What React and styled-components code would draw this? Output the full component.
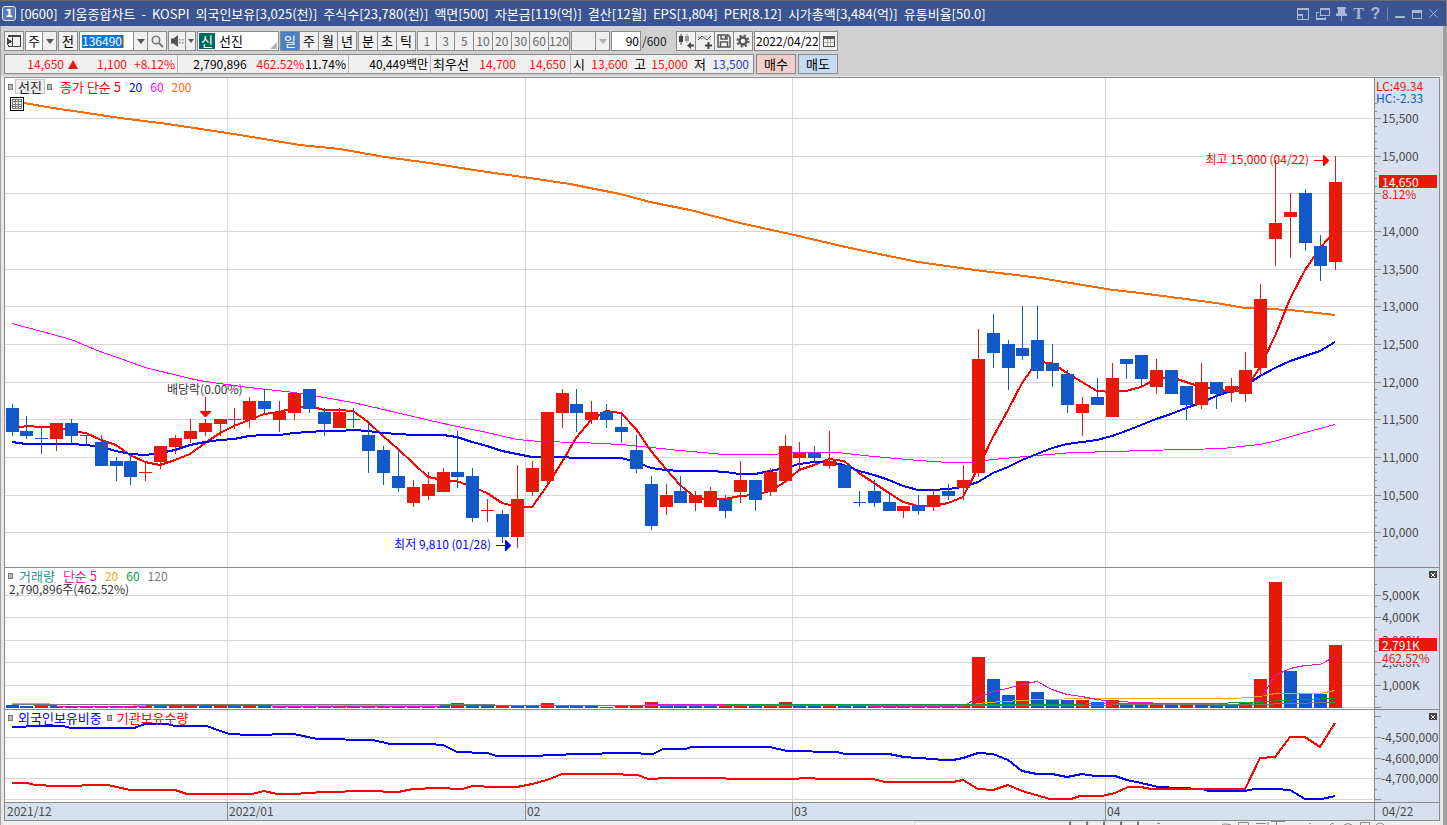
import React from 'react';
import styled, { createGlobalStyle } from 'styled-components';

const colors = {
  titleBlue: '#3a5592',
  titleIcon: '#a9b6d4',
  panel: '#d0d0d0',
  face: '#f0f0f0',
  line: '#8a8a8a',
  grid: '#d6d6d6',
  axis: '#d6e1ef',
  up: '#e71a0a',
  down: '#1159cb',
  red: '#ff0000',
  blue: '#0000ff',
  magenta: '#ff00ff',
  orange: '#ff6a00',
  text: '#333333',
};

const PLOT_LEFT = 5;
const PLOT_WIDTH = 1369;
const MONTH_LINES = [227, 525, 792, 1105];

const TITLE_FIELDS = [
  '[0600]', '키움종합차트', '-', 'KOSPI', '외국인보유[3,025(천)]', '주식수[23,780(천)]', '액면[500]', '자본금[119(억)]',
  '결산[12월]', 'EPS[1,804]', 'PER[8.12]', '시가총액[3,484(억)]', '유통비율[50.0]',
];

// [high, bodyTop, bodyBottom, low, up?]
const CANDLES = [
  [404, 408, 432, 436, 0], [416, 431, 436, 439, 0], [428, 438, 439, 454, 0], [423, 423, 439, 451, 1],
  [419, 423, 436, 444, 0], [435, 435, 436, 446, 0], [435, 442, 466, 466, 0], [457, 461, 466, 481, 0],
  [455, 461, 477, 485, 0], [462, 472, 473, 481, 1], [446, 446, 462, 469, 1], [435, 438, 447, 454, 1],
  [419, 431, 439, 443, 1], [419, 423, 432, 436, 1], [419, 419, 424, 436, 1], [408, 419, 420, 429, 1],
  [397, 401, 420, 428, 1], [389, 401, 409, 413, 0], [401, 412, 420, 432, 1], [393, 393, 413, 420, 1],
  [389, 389, 409, 413, 0], [408, 412, 424, 436, 0], [408, 412, 428, 428, 1], [408, 419, 420, 428, 0],
  [423, 435, 451, 473, 0], [446, 450, 473, 485, 0], [449, 476, 488, 492, 0], [480, 487, 503, 507, 1],
  [472, 484, 496, 500, 1], [468, 472, 492, 492, 1], [431, 472, 477, 488, 0], [468, 476, 518, 522, 0],
  [499, 510, 511, 522, 1], [510, 514, 537, 543, 0], [465, 499, 537, 548, 1], [461, 468, 492, 496, 1],
  [412, 412, 481, 484, 1], [389, 393, 413, 428, 1], [389, 404, 413, 432, 0], [401, 412, 420, 424, 1],
  [404, 412, 420, 428, 0], [412, 427, 432, 443, 0], [435, 450, 469, 473, 0], [476, 484, 526, 530, 0],
  [484, 495, 507, 515, 1], [476, 491, 503, 503, 0], [491, 495, 503, 511, 1], [487, 491, 507, 507, 1],
  [495, 499, 511, 518, 0], [461, 480, 492, 503, 1], [480, 480, 500, 511, 0], [468, 472, 492, 496, 1],
  [435, 446, 481, 481, 1], [442, 453, 458, 470, 1], [446, 453, 458, 462, 0], [431, 461, 466, 469, 1],
  [465, 465, 488, 488, 0], [491, 502, 503, 507, 0], [480, 491, 503, 507, 0], [494, 502, 511, 511, 0],
  [506, 506, 511, 518, 1], [495, 506, 511, 515, 0], [490, 495, 507, 511, 1], [484, 491, 496, 500, 0],
  [465, 480, 488, 500, 1], [329, 359, 473, 477, 1], [314, 333, 353, 368, 0], [340, 344, 368, 390, 0],
  [306, 348, 356, 360, 0], [306, 340, 371, 379, 0], [344, 363, 371, 387, 0], [370, 374, 405, 413, 0],
  [397, 404, 413, 436, 1], [378, 397, 405, 405, 0], [363, 378, 417, 417, 1], [359, 359, 364, 379, 0],
  [355, 355, 379, 386, 0], [359, 370, 387, 394, 1], [370, 370, 394, 394, 0], [386, 386, 405, 420, 0],
  [363, 382, 405, 409, 1], [382, 382, 394, 409, 0], [378, 386, 392, 402, 1], [352, 370, 394, 402, 1],
  [284, 299, 368, 375, 1], [160, 223, 239, 266, 1], [193, 212, 217, 258, 1], [189, 193, 243, 251, 0],
  [235, 246, 266, 281, 0], [156, 182, 262, 270, 1],
];

const MA5 = [
  429, 426, 427, 427, 431, 433, 440, 445, 455, 462, 465, 460, 454, 443, 433, 426, 420, 414, 412, 408,
  406, 410, 410, 411, 422, 436, 449, 463, 477, 480, 481, 487, 493, 503, 507, 507, 486, 462, 438, 420,
  411, 413, 429, 451, 469, 485, 497, 500, 499, 496, 495, 491, 482, 470, 465, 459, 461, 473, 483, 493,
  502, 506, 506, 503, 497, 468, 437, 410, 383, 362, 363, 373, 382, 391, 392, 391, 387, 379, 377, 382,
  387, 389, 392, 390, 367, 336, 299, 270, 248, 231,
];

const MA20 = [
  442, 444, 444, 444, 444, 445, 447, 451, 454, 455, 453, 450, 445, 442, 440, 439, 436, 435, 435, 433,
  432, 431, 431, 430, 431, 433, 434, 435, 435, 435, 437, 442, 446, 451, 454, 457, 457, 457, 458, 458,
  458, 458, 462, 468, 470, 471, 471, 471, 472, 474, 474, 471, 468, 464, 462, 462, 465, 471, 475, 480,
  486, 490, 490, 489, 487, 482, 473, 467, 460, 454, 448, 444, 442, 440, 436, 431, 425, 419, 414, 408,
  403, 396, 391, 386, 376, 368, 361, 356, 351, 342,
];

const MA60 = '12,323 42,331 71,339 100,351 126,360 145,367 190,378 205,381 249,387 294,392 324,397 353,402 383,409 413,416 443,423 487,432 517,439 540,441 580,442 621,444 651,447 680,450 725,454 773,454 793,452 837,452 874,456 918,460 948,462 970,462 993,459 1037,455 1073,452 1118,451 1141,450 1187,449 1223,448 1240,446 1260,444 1277,440 1305,432 1335,424';
const MA200 = '12,100 24,103 53,108 87,113 120,118 168,124 240,135 300,145 340,149 385,157 430,163 480,171 530,178 570,184 620,194 650,202 690,210 740,223 790,234 850,248 918,262 975,270 1040,278 1113,290 1140,293 1216,303 1245,308 1290,310 1335,315';

// one letter per session: r = up volume, b = down volume
const VOLUME_SIDE = 'bbrbbrrrbrbrrbrbrbrbbrrbrbbbbbrbbrbbrbbbbrrrbbbbrrbrrbbrbbbbbrrrrrbbrbbbrbrbbrbrbbbrrrbbbr';
const VOLUME_TOPS = {
  0: 705, 30: 703, 36: 703, 40: 707, 43: 702, 52: 702, 64: 704, 65: 657, 66: 679, 67: 695, 68: 681, 69: 692,
  70: 700, 71: 700, 72: 700, 73: 702, 74: 700, 75: 704, 76: 704, 77: 704, 78: 704, 79: 704, 80: 704,
  81: 704, 82: 706, 83: 703, 84: 679, 85: 582, 86: 671, 87: 693, 88: 694, 89: 645,
};
const VOLUME_LINES = [
  ['#eeaa00', '12,703 49,703 50,704 213,705 690,705 966,705 987,702 1040,699 1088,698 1235,698 1260,696 1275,693 1320,693 1335,690'],
  ['#e01ab8', '34,705 80,706 213,705 330,706 380,706 500,705 793,704 837,704 880,706 963,706 978,697 993,691 1007,688 1022,684 1037,681 1052,689 1067,694 1082,696 1097,699 1112,701 1144,702 1179,704 1231,705 1245,705 1260,700 1275,675 1290,668 1305,665 1320,664 1335,656'],
  ['#0a9a3c', '688,705 762,704 793,704 978,704 1196,703 1260,702 1277,700 1335,698'],
  ['#777777', '12,704 966,705 1262,704 1284,703 1335,702'],
];

const FOREIGN = '12,727 41,726 63,726 71,728 134,728 145,724 167,724 175,726 207,726 220,731 230,734 250,735 294,734 317,739 373,740 390,744 428,744 443,745 457,752 487,753 497,756 532,756 577,754 628,753 653,754 663,749 685,749 692,747 770,747 787,751 837,752 845,754 889,754 904,757 933,759 943,760 953,760 963,758 978,753 993,754 1008,760 1022,771 1037,774 1052,774 1067,777 1082,774 1095,776 1115,776 1127,780 1141,783 1158,787 1202,789 1209,791 1245,791 1254,789 1275,789 1290,790 1305,799 1322,799 1335,796';
const INSTITUTION = '12,783 27,783 35,785 57,786 108,785 130,790 175,790 187,794 252,794 264,791 277,794 294,794 324,792 367,791 398,792 413,789 437,788 462,789 473,786 495,787 517,787 532,784 547,780 562,774 607,774 638,775 648,779 668,778 725,778 727,779 785,779 813,778 817,779 873,779 885,782 953,782 963,780 978,789 993,790 1008,785 1022,791 1050,799 1071,799 1080,796 1102,796 1115,793 1128,787 1141,787 1151,789 1245,789 1260,758 1275,757 1290,737 1305,737 1320,747 1335,723';

const candleX = i => Math.floor(12 + i * 14.866);
const toPoints = values => values.map((y, i) => `${candleX(i)},${y}`).join(' ');
const leftOf = x => `${((x - PLOT_LEFT) / PLOT_WIDTH) * 100}%`;

const GlobalStyle = createGlobalStyle`
  * { box-sizing: border-box; }
  body {
    margin: 0;
    background: #a0a0a0;
    color: #000;
    font: 13px/14px "Noto Sans CJK KR", sans-serif;
  }
  button, input, select { font: inherit; color: inherit; margin: 0; padding: 0; border-radius: 0; }
`;

const Window = styled.div`
  min-height: 100vh;
  overflow: hidden;
  display: flex;
  flex-direction: column;
`;

const TitleBar = styled.header`
  height: 26px;
  padding: 0 7px 0 2px;
  display: flex;
  align-items: center;
  border-top: 1px solid #6b6b6b;
  border-right: 1px solid #7a7a7a;
  background: ${colors.titleBlue};
  color: #fff;
`;

const WindowNumber = styled.span`
  width: 14px;
  height: 15px;
  border: 1px solid #dfe6f5;
  border-radius: 3px;
  background: #5d7ab8;
  font: bold 11px/13px "DejaVu Sans", sans-serif;
  text-align: center;
`;

const Title = styled.h1`
  flex: 1;
  margin: 0 0 0 4px;
  display: flex;
  gap: 6px;
  font-size: 13px;
  font-weight: 400;
  line-height: 18px;
  white-space: nowrap;
  overflow: hidden;
`;

const TitleActions = styled.div`
  display: flex;
  align-items: center;
  gap: 6px;
  color: ${colors.titleIcon};
`;

const TitleButton = styled.button`
  width: ${p => (p.$narrow ? 11 : 14)}px;
  height: 16px;
  border: 0;
  background: none;
  font: bold 16px/16px ${p => (p.$sans ? '"Liberation Sans"' : '"Liberation Serif"')}, serif;
  display: flex;
  align-items: center;
  justify-content: center;
`;

const TitleDivider = styled.span`
  width: 1px;
  height: 14px;
  background: #7c8299;
`;

const Body = styled.div`
  flex: 1;
  display: flex;
  flex-direction: column;
  margin-right: 4px;
  border-left: 1px solid #a0a0a0;
  background: #e8e8e8;
`;

const Controls = styled.div`
  padding: 5px 3px 2px;
  margin-bottom: 1px;
  display: flex;
  flex-direction: column;
  gap: 3px;
  background: ${colors.panel};
`;

const ToolRow = styled.div`
  display: flex;
  gap: ${p => p.$gap || 1}px;
  height: 20px;
`;

const ToolGroup = styled.div`
  display: flex;
  position: relative;
  width: ${p => p.$width}px;
  border: 1px solid ${colors.line};
  background: ${colors.face};

  && > * + * { border-left: 1px solid ${colors.line}; }
`;

const ToolButton = styled.button`
  flex: ${p => (p.$width ? `0 0 ${p.$width}px` : '1 1 0')};
  border: 0;
  display: flex;
  align-items: center;
  justify-content: center;
  background: ${p => (p.$active ? '#4a80c6' : colors.face)};
  color: ${p => (p.$active ? '#fff' : p.$muted ? '#666' : '#000')};
  font-size: ${p => (p.$muted ? 12 : 13)}px;
`;

const ToolInput = styled.input`
  flex: 1;
  width: 0;
  border: 0;
  padding: 0 1px;
  background: #fff;
  font-size: 12px;
  text-align: ${p => p.$align || 'left'};
  outline: 0;
`;

const CodeField = styled.span`
  flex: 1;
  display: flex;
  align-items: center;
  padding-left: 2px;
  background: #fff;
`;

const CodeInput = styled.input`
  width: 42px;
  height: 13px;
  border: 0;
  border-right: 1px solid #ff8a1e;
  background: #0a78d7;
  color: #fff;
  font-size: 12px;
  outline: 0;
`;

const ToolSelect = styled.select`
  flex: 1;
  width: 0;
  border: 0;
  padding: 0 0 0 2px;
  appearance: none;
  background: ${p => (p.disabled ? colors.face : '#fff')};
  outline: 0;
`;

const SelectArrow = styled.span`
  position: absolute;
  top: 0;
  right: 0;
  width: 14px;
  height: 18px;
  display: flex;
  align-items: center;
  justify-content: center;
  background: ${colors.face};
  pointer-events: none;
`;

const StockBadge = styled.span`
  width: 16px;
  margin: 1px 4px 1px 1px;
  background: #006860;
  color: #fff;
  line-height: 16px;
  text-align: center;
`;

const StockBox = styled.div`
  display: flex;
  position: relative;
  width: 82px;
  border: 1px solid ${colors.line};
  background: #fff;
  line-height: 17px;

  &::after {
    content: '';
    position: absolute;
    right: 1px;
    bottom: 1px;
    border-style: solid;
    border-width: 0 0 7px 7px;
    border-color: transparent transparent #b4b4b4;
  }
`;

const CountTotal = styled.span`
  width: 33px;
  font-size: 12px;
  line-height: 20px;
  color: #222;
`;

const Quote = styled.div`
  display: flex;
  width: 750px;
  border: 1px solid ${colors.line};
  background: ${colors.face};
`;

const QuoteCell = styled.div`
  width: ${p => p.$width}px;
  padding: 0 2px;
  display: flex;
  align-items: center;
  white-space: nowrap;

  & + & { border-left: 1px solid #b4b4b4; }
`;

const QuoteValue = styled.span`
  width: ${p => p.$width}px;
  text-align: right;
  font-size: ${p => (p.$label ? 13 : 12)}px;
  color: ${p => p.$color || '#000'};
`;

const UpMark = styled.span`
  margin-left: 4px;
  border-style: solid;
  border-width: 0 5px 9px;
  border-color: transparent transparent ${colors.up};
`;

const OrderButton = styled.button`
  width: 40px;
  border: 1px solid ${colors.line};
  background: ${p => p.$background};
`;

const ChartFrame = styled.main`
  margin: 0 3px;
  border: 1px solid ${colors.line};
  border-bottom: 0;
  background: #fff;
`;

const Panel = styled.section`
  display: grid;
  grid-template-columns: 1fr 65px;
  border-bottom: 1px solid ${colors.line};
`;

const Plot = styled.div`
  position: relative;
  min-width: 0;
`;

const Axis = styled.div`
  position: relative;
  border-left: 1px solid ${colors.line};
  background: ${colors.axis};
  color: #4a4a4a;
  font-size: 12px;
  line-height: 13px;
`;

const Drawing = styled.svg`
  display: block;
  width: 100%;
  height: ${p => p.$height}px;
`;

const AxisLabel = styled.span`
  position: absolute;
  left: ${p => p.$left || 7}px;
  color: ${p => p.$color || 'inherit'};
  background: ${p => (p.$cover ? colors.axis : 'none')};
  white-space: nowrap;
`;

const PriceTag = styled.strong`
  position: absolute;
  left: 4px;
  right: 2px;
  padding-left: 3px;
  background: ${colors.up};
  color: #fff;
  font-weight: 400;
`;

const CloseButton = styled.button`
  position: absolute;
  top: 3px;
  right: 2px;
  width: 8px;
  height: 7px;
  border: 0;
  background: #444;
  color: #fff;
  display: flex;
  align-items: center;
  justify-content: center;
`;

const Legend = styled.div`
  position: absolute;
  top: 1px;
  left: 3px;
  display: flex;
  align-items: center;
  gap: 8px;
  white-space: nowrap;
`;

const LegendItem = styled.span`
  color: ${p => p.$color};
  font-size: ${p => (p.$period ? 12 : 13)}px;
`;

const LegendMark = styled.i`
  width: 5px;
  height: 6px;
  border: 1px solid #777;
  background: #bbb;
`;

const LegendPair = styled.span`
  display: flex;
  align-items: center;
  gap: ${p => p.$gap}px;
`;

const SeriesButton = styled.button`
  width: 30px;
  height: 15px;
  border: 1px solid #c4c4c4;
  background: #ececec;
  line-height: 13px;
  color: #222;
`;

const TableButton = styled.button`
  position: absolute;
  top: 19px;
  left: 5px;
  width: 14px;
  height: 14px;
  border: 1px solid #000;
  background: #fff;
  display: flex;
  align-items: center;
  justify-content: center;
`;

const VolumeNote = styled.p`
  position: absolute;
  top: 14px;
  left: 4px;
  margin: 0;
  color: ${colors.text};
  font-size: 12px;
`;

const Note = styled.span`
  position: absolute;
  color: ${p => p.$color};
  font-size: 12px;
  white-space: nowrap;
  transform: translateX(${p => (p.$end ? '-100%' : '0')});
`;

const DateRow = styled.div`
  display: grid;
  grid-template-columns: 1fr 65px;
  height: 18px;
  border-bottom: 1px solid ${colors.line};
  background: ${colors.axis};
  color: #4a4a4a;
  font-size: 12px;
  line-height: 16px;
`;

const DateTrack = styled.div`
  position: relative;
`;

const DateMark = styled.time`
  position: absolute;
  height: 17px;
  padding-left: 1px;
  border-left: 1px solid ${p => (p.$first ? 'transparent' : colors.line)};
`;

const LastDate = styled.time`
  padding-left: 7px;
  border-left: 1px solid ${colors.line};
`;

const ScrollStrip = styled.footer`
  height: 4px;
  margin: 0 3px;
  display: flex;
  justify-content: flex-end;
  background: #f0f0f0;
  overflow: hidden;
`;

const Thumb = styled.span`
  width: 157px;
  border: 1px solid #dcdcdc;
  border-right: 2px solid #777;
  border-bottom: 0;
`;

const ScrollButton = styled.button`
  width: 17px;
  height: 12px;
  border: 1px solid #dcdcdc;
  border-right: 2px solid #777;
  background: ${colors.face};
`;

const StripIcons = styled.svg`
  width: 301px;
  height: 4px;
`;

const Arrow = ({ color = '#555' }) => (
  <svg width="8" height="5" viewBox="0 0 8 5"><path d="M0 0h8L4 5z" fill={color} /></svg>
);

function TitleIcons() {
  return (
    <TitleActions>
      <TitleButton aria-label="화면 축소">
        <svg width="12" height="12" fill="none" stroke="currentColor" strokeWidth="1" shapeRendering="crispEdges">
          <path d="M.5 11.5V1.5h11v10zM0 .5h12M0 6.5h5.500v5M0 7.500h5" />
        </svg>
      </TitleButton>
      <TitleButton aria-label="화면 복사">
        <svg width="14" height="12" fill="none" stroke="currentColor" shapeRendering="crispEdges">
          <path d="M4.500 1.500h9v6h-9zM4 .5h10M3 4.500H.5v7h9V9M0 10.500h9" />
        </svg>
      </TitleButton>
      <TitleButton aria-label="고정" $narrow>
        <svg width="11" height="14" fill="currentColor"><path d="M1 0h9v2H9v4h1l1 1v2H6v5H5V9H0V7l1-1h1V2H1z" /></svg>
      </TitleButton>
      <TitleButton aria-label="글꼴" $narrow>T</TitleButton>
      <TitleButton aria-label="도움말" $narrow $sans>?</TitleButton>
      <TitleDivider />
      <TitleButton aria-label="최소화" $narrow>
        <svg width="10" height="12" fill="currentColor"><path d="M0 8h10v2H0z" /></svg>
      </TitleButton>
      <TitleButton aria-label="최대화" $narrow>
        <svg width="10" height="12" fill="none" stroke="currentColor" shapeRendering="crispEdges"><path d="M.5 2.500h9v8h-9zM0 3.500h10M0 4.500h10" /></svg>
      </TitleButton>
      <TitleButton aria-label="닫기" $narrow>
        <svg width="9" height="9" fill="none" stroke="currentColor"><path d="M.5.5l8 8M8.500.5l-8 8" /></svg>
      </TitleButton>
    </TitleActions>
  );
}

function Toolbar() {
  return (
    <ToolRow>
      <ToolGroup $width={20}>
        <ToolButton aria-label="목록 열기">
          <svg width="14" height="14" fill="none" stroke="#444" shapeRendering="crispEdges">
            <path d="M1.500 3V1.500h12v11h-12V11M1 2.500h13M5.500 2v11" />
            <path d="M0 4l5 3.500L0 11z" fill="#444" stroke="none" />
          </svg>
        </ToolButton>
      </ToolGroup>
      <ToolGroup $width={32}>
        <ToolSelect aria-label="구분" defaultValue="주"><option>주</option></ToolSelect>
        <SelectArrow><Arrow /></SelectArrow>
      </ToolGroup>
      <ToolGroup $width={20}><ToolButton>전</ToolButton></ToolGroup>
      <ToolGroup $width={88}>
        <CodeField><CodeInput aria-label="종목코드" defaultValue="136490" /></CodeField>
        <ToolButton aria-label="최근 종목" $width={14}><Arrow /></ToolButton>
        <ToolButton aria-label="종목 검색" $width={19}>
          <svg width="13" height="13" fill="none" stroke="#777" strokeWidth="2">
            <circle cx="5" cy="5" r="3.700" strokeWidth="1.600" /><path d="M8 8l4 4" />
          </svg>
        </ToolButton>
      </ToolGroup>
      <ToolGroup $width={28}>
        <ToolButton aria-label="소리" $width={16}>
          <svg width="13" height="12" fill="#555">
            <path d="M0 3.500h2.500L7 0v12L2.500 8.500H0z" /><path d="M8 4h1.500v1.500H8zM11 4h1.500v1.500H11zM8 7h1.500v1.500H8zM11 7h1.500v1.500H11z" fill="#888" />
          </svg>
        </ToolButton>
        <ToolButton aria-label="소리 설정"><svg width="6" height="4"><path d="M0 0h6L3 4z" fill="#555" /></svg></ToolButton>
      </ToolGroup>
      <StockBox><StockBadge>신</StockBadge>선진</StockBox>
      <ToolGroup $width={77}>
        {['일', '주', '월', '년'].map(t => <ToolButton key={t} $active={t === '일'}>{t}</ToolButton>)}
      </ToolGroup>
      <ToolGroup $width={58}>
        {['분', '초', '틱'].map(t => <ToolButton key={t}>{t}</ToolButton>)}
      </ToolGroup>
      <ToolGroup $width={153}>
        {[1, 3, 5, 10, 20, 30, 60, 120].map(n => <ToolButton key={n} $muted>{n}</ToolButton>)}
      </ToolGroup>
      <ToolGroup $width={39}>
        <ToolSelect aria-label="간격" disabled />
        <SelectArrow><Arrow color="#b0b0b0" /></SelectArrow>
      </ToolGroup>
      <ToolGroup $width={30}><ToolInput aria-label="표시 개수" $align="right" defaultValue="90" /></ToolGroup>
      <CountTotal>/600</CountTotal>
      <ToolGroup $width={77}>
        <ToolButton aria-label="차트 유형">
          <svg width="16" height="15" fill="#444">
            <path d="M2.500 0h1v11h-1zM1 2h4v6H1z" /><path d="M8.500 0h1v9h-1zM7 2h4v5H7z" fill="#999" />
            <path d="M9 11.500l4-3.500v2.500h3v2h-3V15z" />
          </svg>
        </ToolButton>
        <ToolButton aria-label="지표 추가">
          <svg width="16" height="15" fill="none" stroke="#444">
            <path d="M1 6l4-4 5 4 4-4" /><path d="M1 3l4 2 4-3 5 4" stroke="#aaa" /><path d="M11.500 8v7M8 11.500h7" strokeWidth="2" />
          </svg>
        </ToolButton>
        <ToolButton aria-label="저장">
          <svg width="14" height="14" fill="none" stroke="#555" strokeWidth="1.500">
            <path d="M1 1h10l2 2v10H1zM4 1v4h6V1M3.500 13V8h7v5" /><path d="M8.500 2v2" />
          </svg>
        </ToolButton>
        <ToolButton aria-label="설정">
          <svg width="14" height="14" fill="none" stroke="#555">
            <circle cx="7" cy="7" r="5.500" strokeWidth="2" strokeDasharray="2.160 2.160" /><circle cx="7" cy="7" r="3.500" strokeWidth="2.400" />
          </svg>
        </ToolButton>
      </ToolGroup>
      <ToolGroup $width={84}>
        <ToolInput aria-label="기준일" defaultValue="2022/04/22" />
        <ToolButton aria-label="달력" $width={18}>
          <svg width="12" height="11" fill="none" stroke="#555" shapeRendering="crispEdges">
            <path d="M.5.5h11v10H.5zM0 1.500h12M0 2.500h12" /><path d="M4.500 3v7M7.500 3v7M1 6.500h10" stroke="#aaa" />
          </svg>
        </ToolButton>
      </ToolGroup>
    </ToolRow>
  );
}

function QuoteRow() {
  return (
    <ToolRow $gap={2}>
      <Quote>
        <QuoteCell $width={172}>
          <QuoteValue $width={57} $color={colors.up}>14,650</QuoteValue>
          <UpMark />
          <QuoteValue $width={49} $color={colors.up}>1,100</QuoteValue>
          <QuoteValue $width={48} $color={colors.up}>+8.12%</QuoteValue>
        </QuoteCell>
        <QuoteCell $width={171}>
          <QuoteValue $width={67}>2,790,896</QuoteValue>
          <QuoteValue $width={58} $color={colors.up}>462.52%</QuoteValue>
          <QuoteValue $width={42}>11.74%</QuoteValue>
        </QuoteCell>
        <QuoteCell $width={82}>
          <QuoteValue $width={77}>40,449백만</QuoteValue>
        </QuoteCell>
        <QuoteCell $width={140}>
          최우선
          <QuoteValue $width={47} $color={colors.up}>14,700</QuoteValue>
          <QuoteValue $width={50} $color={colors.up}>14,650</QuoteValue>
        </QuoteCell>
        <QuoteCell $width={183}>
          시
          <QuoteValue $width={43} $color={colors.up}>13,600</QuoteValue>
          <QuoteValue $width={18} $label>고</QuoteValue>
          <QuoteValue $width={42} $color={colors.up}>15,000</QuoteValue>
          <QuoteValue $width={18} $label>저</QuoteValue>
          <QuoteValue $width={43} $color="#1a3fc4">13,500</QuoteValue>
        </QuoteCell>
      </Quote>
      <OrderButton $background="#f4cfca">매수</OrderButton>
      <OrderButton $background="#c5dcf2">매도</OrderButton>
    </ToolRow>
  );
}

function Grid({ rows, top, bottom }) {
  return (
    <g stroke={colors.grid} shapeRendering="crispEdges">
      {rows.map(y => <path key={y} d={`M5 ${y + 0.5}H1373`} />)}
      {MONTH_LINES.map(x => <path key={x} d={`M${x + 0.5} ${top}V${bottom}`} />)}
    </g>
  );
}

function Ticks({ top, height, major, minor }) {
  return (
    <Drawing $height={height} viewBox={`0 ${top} 64 ${height}`} preserveAspectRatio="none" stroke={colors.line} shapeRendering="crispEdges">
      {major.map(y => <path key={y} d={`M0 ${y + 0.5}h6`} />)}
      {minor.map(y => <path key={y} d={`M0 ${y + 0.5}h2`} />)}
    </Drawing>
  );
}

const PRICE_ROWS = [118, 156, 193, 231, 269, 306, 344, 382, 419, 457, 495, 532];
const PRICE_LABELS = ['15,500', '15,000', null, '14,000', '13,500', '13,000', '12,500', '12,000', '11,500', '11,000', '10,500', '10,000'];
const PRICE_MINOR = Array.from({ length: 61 }, (_, i) => Math.round(103 + i * 7.53));
const VOLUME_ROWS = [595, 617, 640, 662, 685];
const HOLDING_ROWS = [737, 758, 778, 799];

function PricePanel() {
  return (
    <Panel>
      <Plot>
        <Drawing $height={489} viewBox="5 78 1369 489" preserveAspectRatio="none">
          <Grid rows={PRICE_ROWS} top={78} bottom={567} />
          <g fill="none" strokeWidth="2" shapeRendering="crispEdges">
            <polyline points={MA200} stroke={colors.orange} />
            <polyline points={MA60} stroke={colors.magenta} strokeWidth="1" transform="translate(0 0.5)" />
            <polyline points={toPoints(MA5)} stroke={colors.red} />
            <polyline points={toPoints(MA20)} stroke={colors.blue} />
          </g>
          <g shapeRendering="crispEdges">
            {CANDLES.map(([high, open, close, low, up], i) => (
              <g key={i} fill={up ? colors.up : colors.down}>
                <rect x={candleX(i)} y={high} width="1" height={low - high} />
                <rect x={candleX(i) - 6} y={open} width="13" height={close - open} />
              </g>
            ))}
          </g>
          <path d="M205 397h1v14h5v1l-5 5h-1l-5-5v-1h5z" fill={colors.red} />
          <path d="M496 545h9v-5h1l5 5v1l-5 5h-1v-5h-9z" fill={colors.blue} />
          <path d="M1314 160h9v-5h1l5 5v1l-5 5h-1v-5h-9z" fill={colors.red} />
        </Drawing>
        <Legend>
          <LegendPair $gap={2}>
            <LegendMark />
            <SeriesButton>선진</SeriesButton>
            <LegendMark />
          </LegendPair>
          <LegendItem $color={colors.red}>종가 단순 5</LegendItem>
          <LegendItem $period $color={colors.blue}>20</LegendItem>
          <LegendItem $period $color={colors.magenta}>60</LegendItem>
          <LegendItem $period $color={colors.orange}>200</LegendItem>
        </Legend>
        <TableButton aria-label="데이터 표">
          <svg width="10" height="10" fill="none" stroke="#777" shapeRendering="crispEdges">
            <path d="M.5.5h9v9h-9zM0 2.500h10M0 5.500h10M0 7.500h10M3.500 0v10M6.500 0v10" />
          </svg>
        </TableButton>
        <Note $color={colors.text} style={{ left: leftOf(167), top: 304 }}>배당락(0.00%)</Note>
        <Note $color={colors.blue} $end style={{ left: leftOf(491), top: 459 }}>최저 9,810 (01/28)</Note>
        <Note $color={colors.red} $end style={{ left: leftOf(1309), top: 74 }}>최고 15,000 (04/22)</Note>
      </Plot>
      <Axis>
        <Ticks top={78} height={489} major={PRICE_ROWS} minor={PRICE_MINOR} />
        <AxisLabel $left={1} $color={colors.up} style={{ top: 1 }}>LC:49.34</AxisLabel>
        <AxisLabel $left={1} $color={colors.down} style={{ top: 13 }}>HC:-2.33</AxisLabel>
        {PRICE_ROWS.map((y, i) => PRICE_LABELS[i] && (
          <AxisLabel key={y} style={{ top: y - 85 }}>{PRICE_LABELS[i]}</AxisLabel>
        ))}
        <PriceTag style={{ top: 97 }}>14,650</PriceTag>
        <AxisLabel $color={colors.up} style={{ top: 109 }}>8.12%</AxisLabel>
      </Axis>
    </Panel>
  );
}

function ClosePanel() {
  return (
    <CloseButton aria-label="지표 닫기">
      <svg width="4" height="4" stroke="currentColor"><path d="M0 0l4 4M4 0L0 4" /></svg>
    </CloseButton>
  );
}

function VolumePanel() {
  return (
    <Panel>
      <Plot>
        <Drawing $height={141} viewBox="5 568 1369 141" preserveAspectRatio="none">
          <Grid rows={[...VOLUME_ROWS, 707]} top={568} bottom={709} />
          <g shapeRendering="crispEdges">
            {CANDLES.map((_, i) => {
              const top = VOLUME_TOPS[i] || 706;
              return (
                <rect key={i} x={candleX(i) - 6} y={top} width="13" height={708 - top} fill={VOLUME_SIDE[i] === 'r' ? colors.up : colors.down} />
              );
            })}
          </g>
          <g fill="none" shapeRendering="crispEdges" transform="translate(0 0.5)">
            {VOLUME_LINES.map(([stroke, points]) => <polyline key={stroke} points={points} stroke={stroke} />)}
          </g>
        </Drawing>
        <Legend>
          <LegendPair $gap={6}>
            <LegendMark />
            <LegendItem $color="#2a9494">거래량</LegendItem>
          </LegendPair>
          <LegendItem $color="#e01ab8">단순 5</LegendItem>
          <LegendItem $period $color="#eeaa00">20</LegendItem>
          <LegendItem $period $color="#0a9a3c">60</LegendItem>
          <LegendItem $period $color="#777777">120</LegendItem>
        </Legend>
        <VolumeNote>2,790,896주(462.52%)</VolumeNote>
      </Plot>
      <Axis>
        <Ticks top={568} height={141} major={[...VOLUME_ROWS, 707]} minor={[584, 606, 629, 651, 674, 696]} />
        {VOLUME_ROWS.map((y, i) => <AxisLabel key={y} style={{ top: y - 575 }}>{`${5 - i},000K`}</AxisLabel>)}
        <PriceTag style={{ top: 70 }}>2,791K</PriceTag>
        <AxisLabel $cover $color={colors.up} style={{ top: 83 }}>462.52%</AxisLabel>
        <ClosePanel />
      </Axis>
    </Panel>
  );
}

function HoldingPanel() {
  return (
    <Panel>
      <Plot>
        <Drawing $height={92} viewBox="5 710 1369 92" preserveAspectRatio="none">
          <Grid rows={HOLDING_ROWS} top={710} bottom={802} />
          <g fill="none" strokeWidth="2" shapeRendering="crispEdges">
            <polyline points={FOREIGN} stroke={colors.blue} />
            <polyline points={INSTITUTION} stroke={colors.red} />
          </g>
        </Drawing>
        <Legend>
          <LegendPair $gap={5}>
            <LegendMark />
            <LegendItem $color={colors.blue}>외국인보유비중</LegendItem>
            <LegendMark />
            <LegendItem $color={colors.red}>기관보유수량</LegendItem>
          </LegendPair>
        </Legend>
      </Plot>
      <Axis>
        <Ticks top={710} height={92} major={[716, ...HOLDING_ROWS]} minor={[727, 748, 768, 789]} />
        {['-4,500,000', '-4,600,000', '-4,700,000'].map((label, i) => (
          <AxisLabel key={label} $left={6} style={{ top: HOLDING_ROWS[i] - 717 }}>{label}</AxisLabel>
        ))}
        <ClosePanel />
      </Axis>
    </Panel>
  );
}

export default function App() {
  return (
    <Window>
      <GlobalStyle />
      <TitleBar>
        <WindowNumber>1</WindowNumber>
        <Title>{TITLE_FIELDS.map(field => <span key={field}>{field}</span>)}</Title>
        <TitleIcons />
      </TitleBar>
      <Body>
        <Controls>
          <Toolbar />
          <QuoteRow />
        </Controls>
        <ChartFrame>
          <PricePanel />
          <VolumePanel />
          <HoldingPanel />
          <DateRow>
            <DateTrack>
              <DateMark $first style={{ left: 0 }}>2021/12</DateMark>
              {['2022/01', '02', '03', '04'].map((label, i) => (
                <DateMark key={label} style={{ left: leftOf(MONTH_LINES[i]) }}>{label}</DateMark>
              ))}
            </DateTrack>
            <LastDate>04/22</LastDate>
          </DateRow>
        </ChartFrame>
        <ScrollStrip>
          <Thumb />
          <ScrollButton aria-label="처음" />
          <ScrollButton aria-label="이전" />
          <ScrollButton aria-label="다음" />
          <ScrollButton aria-label="마지막" />
          <StripIcons viewBox="1139 821 301 4" fill="none" stroke="#888">
            <path d="M1157 823.500h3M1222 825q2-2 9 0M1238.500 825v-2.500h10V825M1256 823.500h10M1268 822v3M1271 821.500h14M1276.500 822v3M1309 823.500h2M1330 825q2-3 4-1M1344 825q4-3 8 0M1360.500 825v-2.500h9V825M1376 825q4-4 8 0" />
          </StripIcons>
        </ScrollStrip>
      </Body>
    </Window>
  );
}
